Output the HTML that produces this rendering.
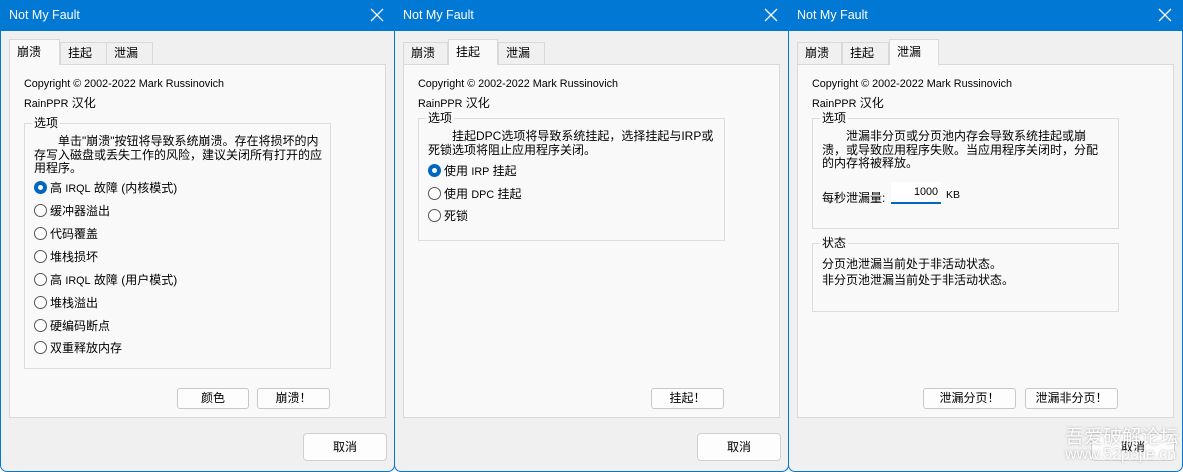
<!DOCTYPE html>
<html><head><meta charset="utf-8"><style>
*{box-sizing:border-box;margin:0;padding:0}
body{width:1183px;height:472px;background:#fff;position:relative;overflow:hidden;font-family:"Liberation Sans","Noto Sans CJK SC",sans-serif;font-size:12px;color:#000}
.win{position:absolute;top:0;height:472px;background:#f0f0f0;border:1px solid #0078d4;border-top:none;border-radius:0 0 7px 7px;overflow:hidden}
.tb{position:absolute;left:0;right:0;top:0;height:31px;background:#0078d4;color:#fff;font-size:12.5px;line-height:31px;padding-left:8px}
.x{position:absolute;right:10px;top:8px;width:14px;height:14px}
.a{position:absolute;white-space:nowrap}
.l{font-size:10.8px}
.panel{position:absolute;left:8px;top:64px;width:377px;height:354px;background:#f9f9f9;border:1px solid #d9d9d9}
.tab{position:absolute;top:42px;height:23px;border:1px solid #d9d9d9;border-bottom:none;background:#f0f0f0;line-height:21px;padding-left:7px;font-size:12px}
.tab.s{top:39px;height:26px;background:#f9f9f9;z-index:2;line-height:25px}
.gb{position:absolute;border:1px solid #dcdcdc}
.gl{position:absolute;top:-8px;left:7px;background:#f9f9f9;padding:0 2px;line-height:14px}
.r{position:absolute;line-height:14px}
.r i{display:inline-block;width:13px;height:13px;border:1px solid #555;border-radius:50%;vertical-align:-2px;margin-right:3px;background:#fff}
.r i.on{border:4px solid #0067c0}
.r b{font-weight:normal;font-size:10.8px}
.btn{position:absolute;height:21px;border:1px solid #c8c8c8;border-radius:3px;background:#fdfdfd;text-align:center;line-height:19px}
.cancel{position:absolute;top:433px;width:84px;height:28px;border:1px solid #d0d0d0;border-radius:4px;background:#fdfdfd;text-align:center;line-height:26px}
</style></head><body>

<!-- Window 1 -->
<div class="win" style="left:0;width:395px">
<div class="tb">Not My Fault<svg class="x" viewBox="0 0 14 14"><path d="M1 1L13 13M13 1L1 13" stroke="#fff" stroke-width="1.3"/></svg></div>
<div class="tab s" style="left:8px;width:51px">崩溃</div>
<div class="tab" style="left:59px;width:47px">挂起</div>
<div class="tab" style="left:105px;width:47px">泄漏</div>
<div class="panel">
 <div class="a l" style="left:14px;top:13px">Copyright © 2002-2022 Mark Russinovich</div>
 <div class="a" style="left:14px;top:29px"><span class="l">RainPPR</span> 汉化</div>
 <div class="gb" style="left:14px;top:58px;width:307px;height:246px">
  <div class="gl">选项</div>
  <div class="a" style="left:9px;top:11px;line-height:13.5px;white-space:normal;width:290px">&emsp;&emsp;单击"崩溃"按钮将导致系统崩溃。存在将损坏的内存写入磁盘或丢失工作的风险，建议关闭所有打开的应用程序。</div>
  <div class="r" style="left:9px;top:57px"><i class="on"></i>高 <b>IRQL</b> 故障 (内核模式)</div>
  <div class="r" style="left:9px;top:80px"><i></i>缓冲器溢出</div>
  <div class="r" style="left:9px;top:103px"><i></i>代码覆盖</div>
  <div class="r" style="left:9px;top:126px"><i></i>堆栈损坏</div>
  <div class="r" style="left:9px;top:149px"><i></i>高 <b>IRQL</b> 故障 (用户模式)</div>
  <div class="r" style="left:9px;top:172px"><i></i>堆栈溢出</div>
  <div class="r" style="left:9px;top:195px"><i></i>硬编码断点</div>
  <div class="r" style="left:9px;top:217px"><i></i>双重释放内存</div>
 </div>
 <div class="btn" style="left:167px;top:323px;width:72px">颜色</div>
 <div class="btn" style="left:247px;top:323px;width:73px">崩溃！</div>
</div>
<div class="cancel" style="left:302px">取消</div>
</div>

<!-- Window 2 -->
<div class="win" style="left:394px;width:395px">
<div class="tb">Not My Fault<svg class="x" viewBox="0 0 14 14"><path d="M1 1L13 13M13 1L1 13" stroke="#fff" stroke-width="1.3"/></svg></div>
<div class="tab" style="left:8px;width:45px">崩溃</div>
<div class="tab s" style="left:53px;width:50px">挂起</div>
<div class="tab" style="left:103px;width:47px">泄漏</div>
<div class="panel">
 <div class="a l" style="left:14px;top:13px">Copyright © 2002-2022 Mark Russinovich</div>
 <div class="a" style="left:14px;top:29px"><span class="l">RainPPR</span> 汉化</div>
 <div class="gb" style="left:14px;top:53px;width:307px;height:123px">
  <div class="gl">选项</div>
  <div class="a" style="left:9px;top:11px;line-height:13.5px;white-space:normal;width:290px">&emsp;&emsp;挂起DPC选项将导致系统挂起，选择挂起与IRP或死锁选项将阻止应用程序关闭。</div>
  <div class="r" style="left:9px;top:45px"><i class="on"></i>使用 <b>IRP</b> 挂起</div>
  <div class="r" style="left:9px;top:68px"><i></i>使用 <b>DPC</b> 挂起</div>
  <div class="r" style="left:9px;top:90px"><i></i>死锁</div>
 </div>
 <div class="btn" style="left:247px;top:323px;width:73px">挂起！</div>
</div>
<div class="cancel" style="left:302px">取消</div>
</div>

<!-- Window 3 -->
<div class="win" style="left:788px;width:395px">
<div class="tb">Not My Fault<svg class="x" viewBox="0 0 14 14"><path d="M1 1L13 13M13 1L1 13" stroke="#fff" stroke-width="1.3"/></svg></div>
<div class="tab" style="left:8px;width:45px">崩溃</div>
<div class="tab" style="left:53px;width:47px">挂起</div>
<div class="tab s" style="left:100px;width:50px">泄漏</div>
<div class="panel">
 <div class="a l" style="left:14px;top:13px">Copyright © 2002-2022 Mark Russinovich</div>
 <div class="a" style="left:14px;top:29px"><span class="l">RainPPR</span> 汉化</div>
 <div class="gb" style="left:14px;top:53px;width:307px;height:111px">
  <div class="gl">选项</div>
  <div class="a" style="left:9px;top:11px;line-height:13.5px;white-space:normal;width:285px">&emsp;&emsp;泄漏非分页或分页池内存会导致系统挂起或崩溃，或导致应用程序失败。当应用程序关闭时，分配的内存将被释放。</div>
  <div class="a" style="left:9px;top:70px">每秒泄漏量:</div>
  <div class="a l" style="left:78px;top:63px;width:50px;height:22px;background:#fff;border-bottom:2px solid #0067c0;text-align:right;padding-right:3px;line-height:20px">1000</div>
  <div class="a" style="left:133px;top:70px;font-size:10.5px">KB</div>
 </div>
 <div class="gb" style="left:14px;top:178px;width:307px;height:69px">
  <div class="gl">状态</div>
  <div class="a" style="left:9px;top:12px;line-height:16px">分页池泄漏当前处于非活动状态。<br>非分页池泄漏当前处于非活动状态。</div>
 </div>
 <div class="btn" style="left:125px;top:323px;width:93px">泄漏分页！</div>
 <div class="btn" style="left:227px;top:323px;width:93px">泄漏非分页！</div>
</div>
<div class="cancel" style="left:302px">取消</div>
<div class="a" style="left:276px;top:422px;color:#fff;font-size:19px;opacity:.9;text-shadow:0 0 2px #999">吾爱破解论坛</div>
<div class="a" style="left:276px;top:446px;color:#fff;font-size:16px;opacity:.9;text-shadow:0 0 2px #999">www.52pojie.cn</div>
</div>
</body></html>
